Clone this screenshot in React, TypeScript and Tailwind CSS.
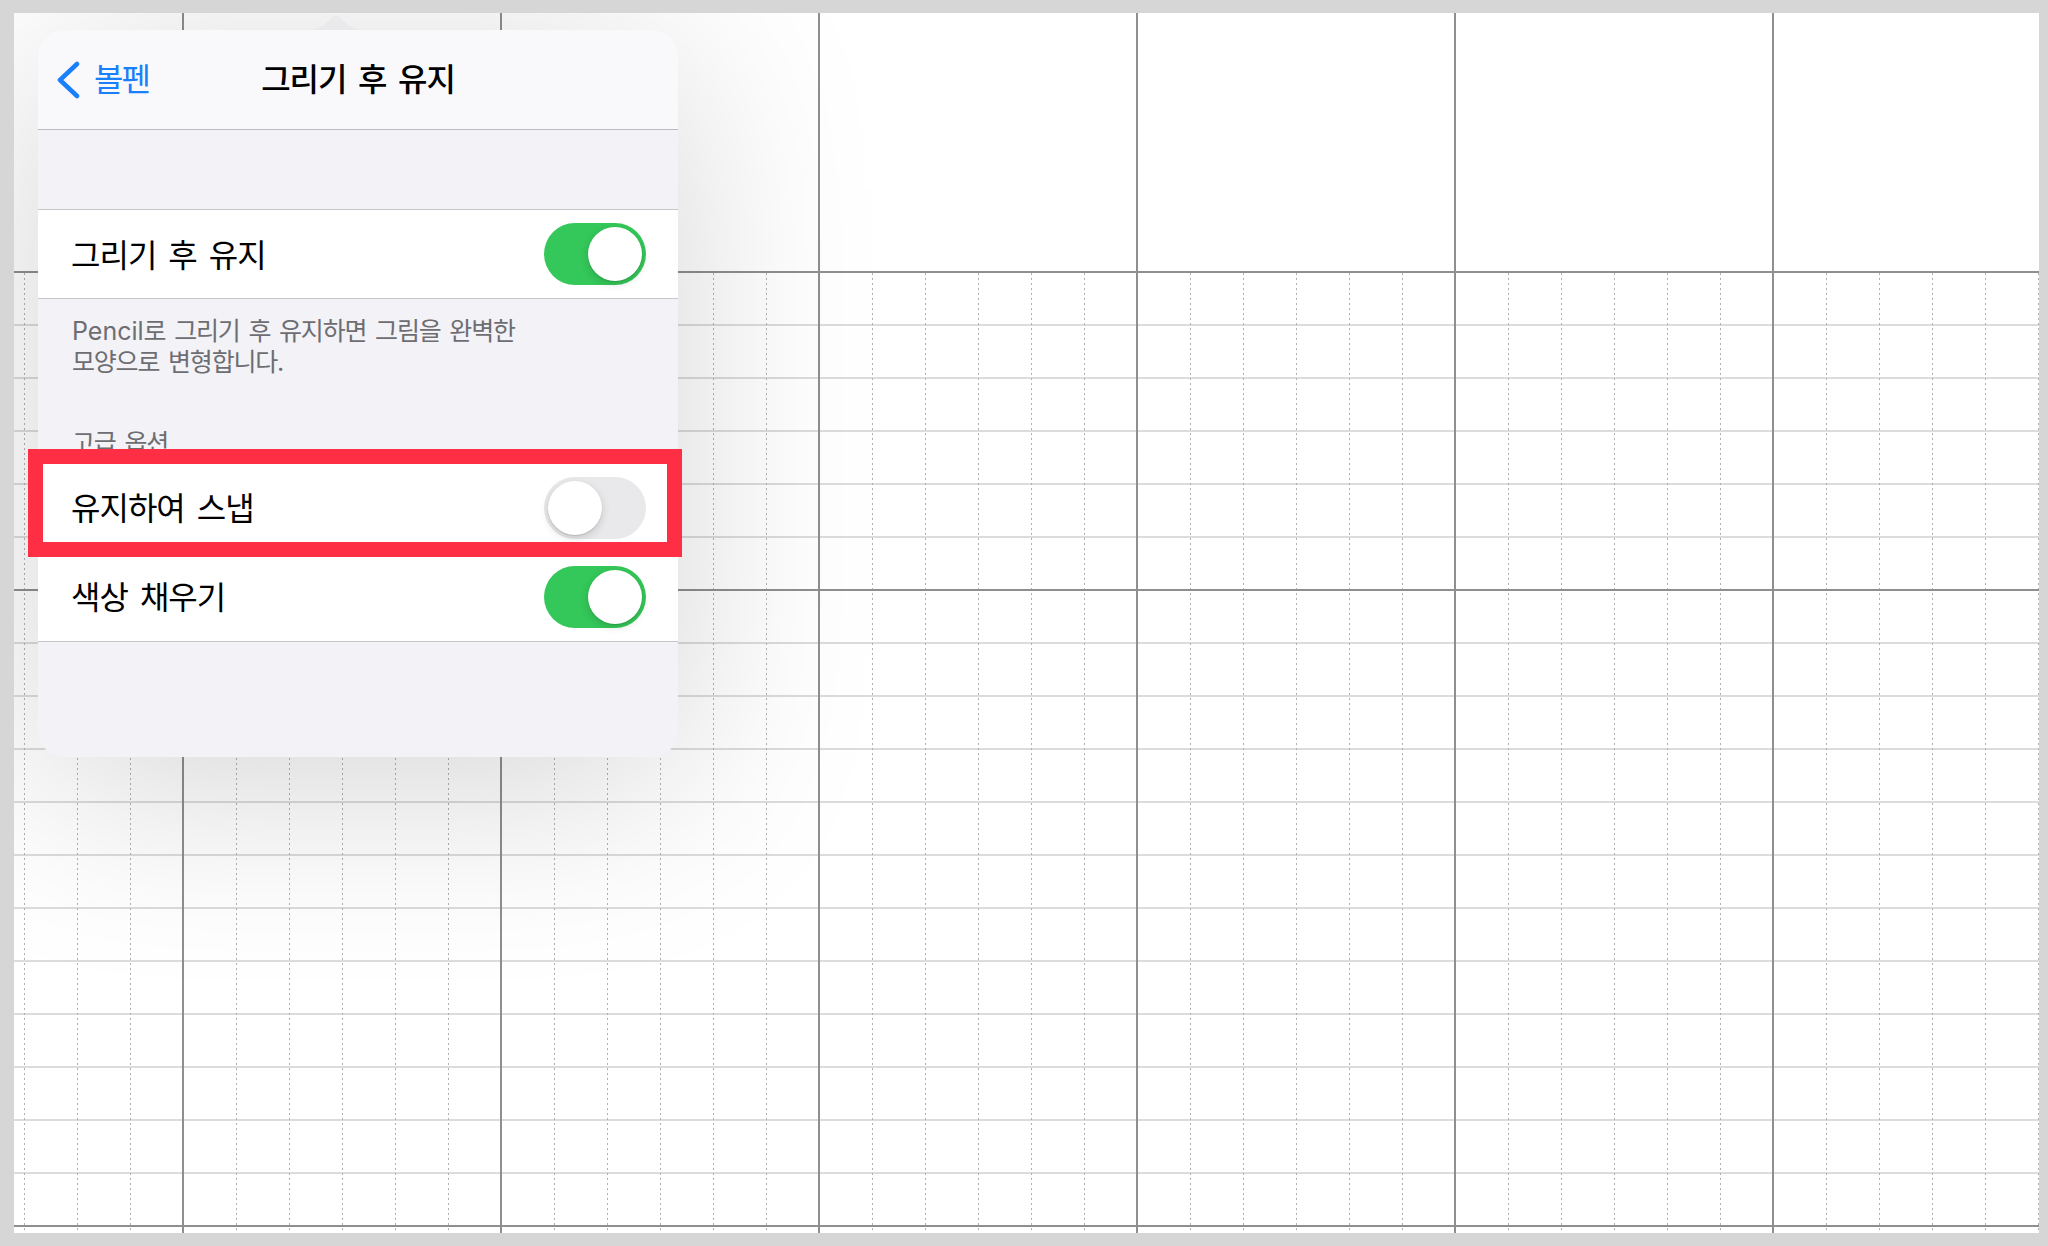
import React from "react";

const FONT = "font-['Inter','Noto_Sans_CJK_KR',sans-serif]";

function Toggle({ on }: { on: boolean }) {
  return (
    <div
      className={
        on
          ? "w-[102px] h-[62px] rounded-full bg-[#34c759] p-[4px] flex justify-end shrink-0"
          : "w-[102px] h-[62px] rounded-full bg-[#e9e9eb] p-[4px] flex justify-start shrink-0"
      }
    >
      <div className="w-[54px] h-[54px] rounded-full bg-white shadow-[0_3px_8px_rgba(0,0,0,0.15),0_1px_1px_rgba(0,0,0,0.12)]" />
    </div>
  );
}

function GridPaper() {
  const W = 2025;
  const H = 1220;
  const majorsX = [169, 487, 805, 1123, 1441, 1759];
  const dotted: number[] = [];
  for (let k = 0; k <= 38; k++) {
    if (k % 6 !== 3) dotted.push(10 + 53 * k);
  }
  const hs: { y: number; major: boolean }[] = [];
  for (let j = 0; j <= 18; j++) {
    hs.push({ y: 259 + 53 * j, major: j === 0 || j === 6 || j === 18 });
  }
  return (
    <svg className="absolute inset-0" width={W} height={H} viewBox={`0 0 ${W} ${H}`}>
      {hs
        .filter((h) => !h.major)
        .map((h) => (
          <line key={"h" + h.y} x1={0} x2={W} y1={h.y} y2={h.y} stroke="#dcdcdc" strokeWidth={2} />
        ))}
      {dotted.map((x) => (
        <line key={"d" + x} x1={x + 0.5} x2={x + 0.5} y1={260} y2={H} stroke="#b0b0b0" strokeWidth={1} strokeDasharray="2 3" />
      ))}
      {hs
        .filter((h) => h.major)
        .map((h) => (
          <line key={"m" + h.y} x1={0} x2={W} y1={h.y} y2={h.y} stroke="#8f8f8f" strokeWidth={2} />
        ))}
      {majorsX.map((x) => (
        <line key={"v" + x} x1={x} x2={x} y1={0} y2={H} stroke="#8f8f8f" strokeWidth={2} />
      ))}
    </svg>
  );
}

export default function App() {
  return (
    <div className={`w-[2048px] h-[1246px] bg-[#d6d6d6] pt-[13px] pl-[14px] ${FONT}`}>
      <div className="relative w-[2025px] h-[1220px] bg-white overflow-hidden">
        <GridPaper />

        {/* Popover */}
        <div className="relative z-10 ml-[24px] flex flex-col w-[640px]">
          <svg width="64" height="17" viewBox="0 0 64 17" className="ml-[266px] block">
            <path d="M0 17 C 14 17, 20 14, 26 6 Q 32 -1.5, 38 6 C 44 14, 50 17, 64 17 Z" fill="#f9f9fb" />
          </svg>
          <div className="w-[640px] h-[727px] rounded-[26px] bg-[#f2f2f7] overflow-hidden shadow-[0_30px_200px_rgba(0,0,0,0.17)] flex flex-col">
            {/* Nav bar */}
            <div className="h-[100px] shrink-0 bg-[#f9f9fb] border-b border-[#bcbcc0] grid grid-cols-[1fr_auto_1fr] items-center">
              <div className="flex items-center pl-[18px] gap-[14px] text-[#1a7ffb]">
                <svg width="24" height="38" viewBox="0 0 24 38">
                  <polyline points="21,3 4,19 21,35" fill="none" stroke="#1a7ffb" strokeWidth="4.5" strokeLinecap="round" strokeLinejoin="round" />
                </svg>
                <span className="text-[32px] leading-none tracking-[-2px]">볼펜</span>
              </div>
              <div className="text-[32px] leading-none font-medium text-black tracking-[-1px] [word-spacing:4px]">그리기 후 유지</div>
              <div />
            </div>

            {/* spacer */}
            <div className="h-[79px] shrink-0" />

            {/* Row 1 */}
            <div className="h-[90px] shrink-0 bg-white border-y border-[#c6c6c8] flex items-center justify-between pl-[33px] pr-[32px]">
              <span className="pt-[3px] text-[32px] leading-none text-black tracking-[-1px] [word-spacing:4px]">그리기 후 유지</span>
              <Toggle on />
            </div>

            {/* Description + header */}
            <div className="shrink-0 pl-[34px] pr-[32px] pt-[17px] pb-[4px] text-[#6d6d72]">
              <p className="text-[25px] leading-[31px] tracking-[-1.2px] [word-spacing:3px]">
                <span className="tracking-normal">Pencil</span>로 그리기 후 유지하면 그림을 완벽한
                <br />
                모양으로 변형합니다.
              </p>
              <p className="mt-[50px] text-[25px] leading-[31px] tracking-[-1.2px] [word-spacing:3px]">고급 옵션</p>
            </div>

            {/* Row 2 */}
            <div className="h-[89px] shrink-0 bg-white flex items-center justify-between pl-[33px] pr-[32px]">
              <span className="pt-[3px] text-[32px] leading-none text-black tracking-[-1px] [word-spacing:4px]">유지하여 스냅</span>
              <Toggle on={false} />
            </div>

            {/* Row 3 */}
            <div className="h-[90px] shrink-0 bg-white border-b border-[#c6c6c8] flex items-center justify-between pl-[33px] pr-[32px]">
              <span className="pt-[3px] text-[32px] leading-none text-black tracking-[-1px] [word-spacing:4px]">색상 채우기</span>
              <Toggle on />
            </div>

            <div className="flex-1" />
          </div>
        </div>

        {/* Red annotation box */}
        <div className="absolute z-20 left-[14px] top-[436px] w-[654px] h-[108px] border-[15px] border-[#fe2f45]" />
      </div>
    </div>
  );
}
